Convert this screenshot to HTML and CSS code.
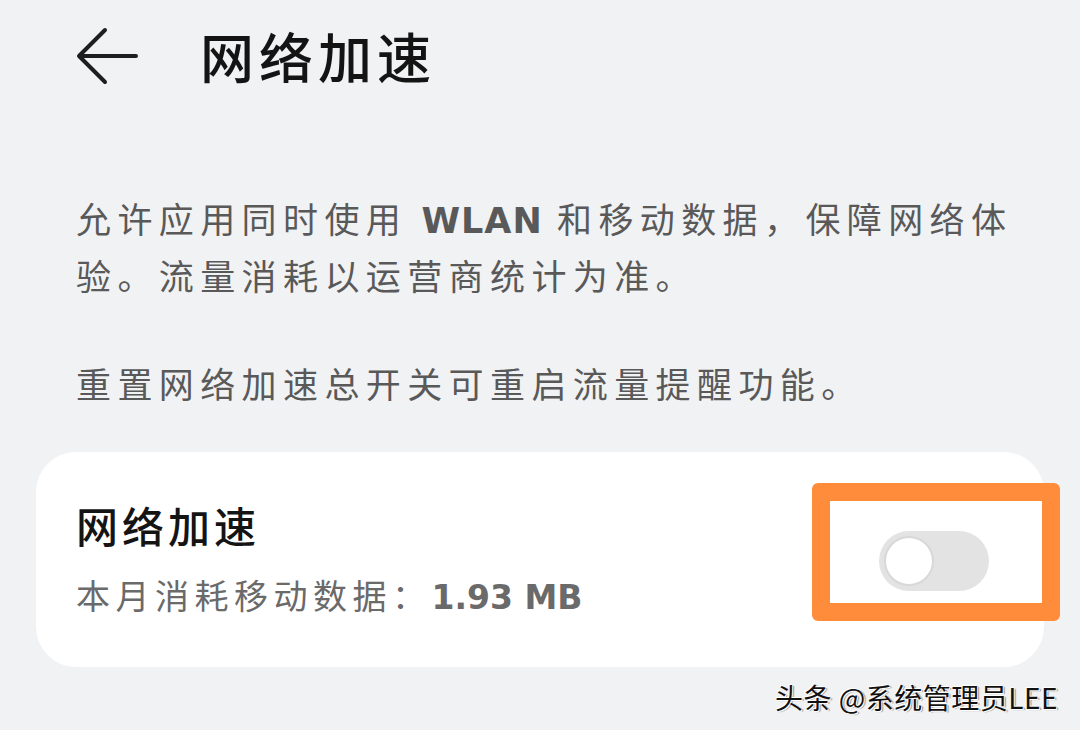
FILE: index.html
```html
<!DOCTYPE html>
<html>
<head>
  <title>网络加速</title>
  <link rel="stylesheet" href="styles.css">
</head>
<body>
  <div class="page">
    <div class="top-bar">
      <svg class="back-icon" width="62" height="58" viewBox="0 0 62 58">
        <path d="M29 3 L3 29 L29 55 M3 29 H60" fill="none" stroke="#1e1e1e" stroke-width="4" stroke-linecap="round" stroke-linejoin="round"/>
      </svg>
      <h1 class="page-title">网络加速</h1>
    </div>

    <div class="intro">
      <p><span>允许应用同时使用 </span><b>WLAN</b><span> 和移动数据，保障网络体验。流量消耗以运营商统计为准。</span></p>
      <p>重置网络加速总开关可重启流量提醒功能。</p>
    </div>

    <div class="setting-card">
      <div class="setting-text">
        <div class="setting-name">网络加速</div>
        <div class="setting-usage">本月消耗移动数据：<span class="num">1.93 MB</span></div>
      </div>
      <div class="highlight-box">
        <div class="switch">
          <span class="switch-knob"></span>
        </div>
      </div>
    </div>

    <div class="watermark">头条 @系统管理员LEE</div>
  </div>
</body>
</html>
```

FILE: styles.css
```css
:root {
  --page-bg: #f1f2f4;
  --card-bg: #ffffff;
  --title-text: #141414;
  --body-text: #595959;
  --sub-text: #6a6a6a;
  --mark-color: #ff8c3b;
  --switch-bg: #e3e3e3;
}

body {
  margin: 0;
  padding: 0;
  background: var(--page-bg);
  font-family: "Noto Sans CJK SC", "Noto Sans", sans-serif;
  color: var(--title-text);
}

.page {
  width: 1080px;
  height: 730px;
  overflow: hidden;
}

.top-bar {
  display: flex;
  align-items: center;
  height: 58px;
  padding: 27px 0 0 76px;
}

.back-icon {
  display: block;
  margin-right: 62px;
}

.page-title {
  margin: 0;
  font-size: 54px;
  font-weight: 500;
  letter-spacing: 5px;
  line-height: 58px;
}

.intro {
  padding: 106px 60px 0 76px;
}

.intro p {
  margin: 0 0 54px;
  font-size: 35px;
  line-height: 54px;
  letter-spacing: 6.4px;
  color: var(--body-text);
}

.intro p:last-child {
  margin-bottom: 0;
}

.intro b {
  font-family: "DejaVu Sans", sans-serif;
  font-weight: bold;
  letter-spacing: 1px;
}

.setting-card {
  display: flex;
  align-items: center;
  justify-content: space-between;
  margin: 42px 36px 0 36px;
  height: 215px;
  padding-left: 40px;
  background: var(--card-bg);
  border-radius: 40px;
}

.setting-name {
  font-size: 42px;
  font-weight: 500;
  letter-spacing: 4px;
  line-height: 56px;
  color: var(--title-text);
}

.setting-usage {
  margin-top: 18px;
  font-size: 34px;
  line-height: 48px;
  letter-spacing: 5.5px;
  color: var(--sub-text);
}

.setting-usage .num {
  font-family: "DejaVu Sans", sans-serif;
  font-size: 33px;
  font-weight: bold;
  letter-spacing: 0;
}

.highlight-box {
  display: flex;
  align-items: center;
  justify-content: center;
  box-sizing: border-box;
  width: 248px;
  height: 138px;
  margin-right: -16px;
  margin-top: -16px;
  border: 18px solid var(--mark-color);
  border-radius: 6px;
  background: var(--card-bg);
}

.switch {
  position: relative;
  width: 110px;
  height: 60px;
  margin: 18px 0 0 -4px;
  border-radius: 30px;
  background: var(--switch-bg);
}

.switch-knob {
  position: absolute;
  top: 5px;
  left: 5px;
  width: 46px;
  height: 46px;
  border-radius: 50%;
  background: #fff;
  border: 2px solid #d8d8d8;
}

.watermark {
  margin: 12px 22px 0 0;
  text-align: right;
  font-size: 28px;
  line-height: 36px;
  letter-spacing: 0.5px;
  color: #111;
  text-shadow: 1px 1px 0 #fff, -1px -1px 0 #fff, 2px 1px 1px #888;
}
```
